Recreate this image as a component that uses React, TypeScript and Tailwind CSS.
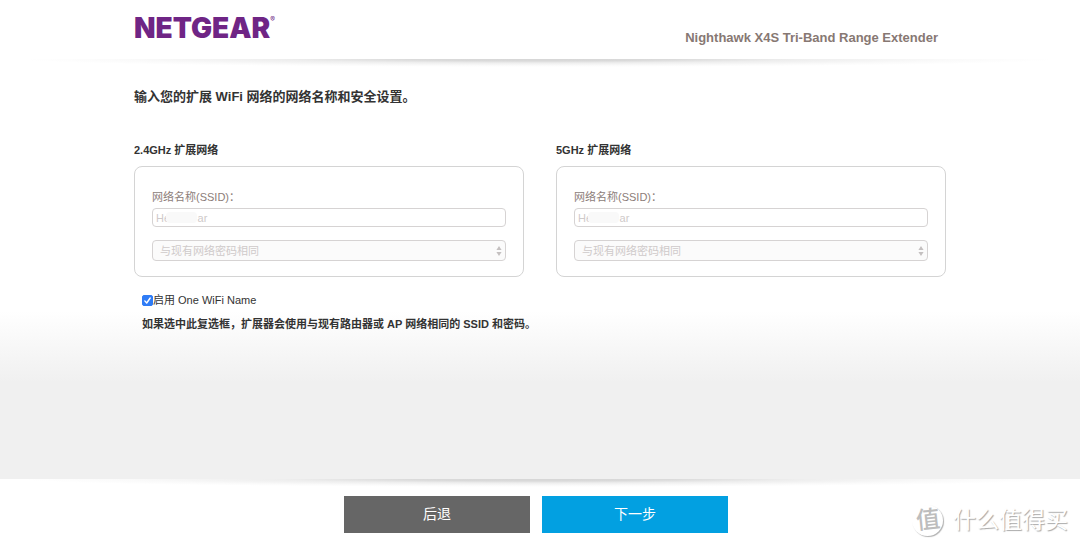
import React, { useId, useState } from "react";

function Divider() {
  return (
    <div
      aria-hidden="true"
      className="h-2 bg-[radial-gradient(48%_100%_at_50%_0%,#d6d6d6_0%,#dadada_25%,#eeeeee_50%,#fafafa_80%,#ffffff_100%)]"
    />
  );
}

function Steppers() {
  return (
    <svg
      aria-hidden="true"
      viewBox="0 0 6 10"
      className="pointer-events-none absolute right-1 top-1/2 h-[10px] w-[6px] -translate-y-1/2 fill-[#c4c0c0]"
    >
      <path d="M3 0 5.6 4H.4zM3 10 .4 6h5.2z" />
    </svg>
  );
}

function NetworkPanel({ title }: { title: string }) {
  const id = useId();
  return (
    <section>
      <h2 className="text-[11px] leading-4 font-bold text-[#333333]">{title}</h2>
      <div className="mt-2 rounded-lg border border-[#d4d4d4] bg-white px-[17px] pt-[22px] pb-[15px]">
        <label htmlFor={`${id}-ssid`} className="block text-[11px] leading-4 text-[#8c7d79]">
          网络名称(SSID)：
        </label>
        <div className="relative mt-[3px]">
          <input
            id={`${id}-ssid`}
            type="text"
            disabled
            defaultValue={"He\u00a0\u00a0\u00a0\u00a0\u00a0\u00a0\u00a0\u00a0\u00a0ar"}
            className="block h-[19px] w-full rounded-[4px] border border-[#d6d3d3] bg-white px-[3px] text-[11px] leading-4 text-[#cfcaca]"
          />
          <span
            aria-hidden="true"
            className="absolute left-[14px] top-[4px] h-[11px] w-[31px] rounded-sm bg-[#f9f9f9]"
          />
        </div>
        <div className="relative mt-[13px]">
          <select
            aria-label="密码"
            disabled
            className="block h-[21px] w-full appearance-none rounded-[4px] border border-[#d6d3d3] bg-[#fbfbfb] px-[7px] text-[11px] leading-4 text-[#cfcaca] opacity-100"
          >
            <option>与现有网络密码相同</option>
          </select>
          <Steppers />
        </div>
      </div>
    </section>
  );
}

function Watermark() {
  return (
    <div className="pointer-events-none absolute right-3 bottom-[11px] flex items-center gap-[10px] text-white [text-shadow:1px_1px_1px_#a8a8a8]">
      <span className="flex size-[31px] items-center justify-center rounded-full text-[24px] leading-none font-medium text-[#bdbdbd] shadow-[1px_1px_1px_#b0b0b0] [text-shadow:none]">
        <span className="-rotate-6">值</span>
      </span>
      <span className="text-[23px] leading-8">什么值得买</span>
    </div>
  );
}

export default function App() {
  const [oneName, setOneName] = useState(true);
  return (
    <div className="flex min-h-screen flex-col bg-white font-['Liberation_Sans','Noto_Sans_CJK_SC',sans-serif] text-[#333333]">
      <header className="bg-white">
        <div className="mx-auto flex h-[59px] w-[812px] max-w-full items-start justify-between">
          <div className="flex items-start pt-3 font-['Inter',sans-serif] text-[#6f2585]">
            <span className="text-[28px] leading-8 font-black">NETGEAR</span>
            <span className="pt-1 text-[7px] leading-[8px]">®</span>
          </div>
          <p className="pt-7 pr-2 text-[13px] leading-5 font-bold text-[#877873]">
            Nighthawk X4S Tri-Band Range Extender
          </p>
        </div>
      </header>

      <main className="flex-1 bg-[linear-gradient(to_bottom,#ffffff_60%,#f7f7f7_69%,#f0f0f0_77%)]">
        <Divider />
        <div className="mx-auto w-[812px] max-w-full pt-5">
          <h1 className="text-[13px] leading-5 font-bold">输入您的扩展 WiFi 网络的网络名称和安全设置。</h1>
          <div className="mt-[35px] grid grid-cols-2 gap-8">
            <NetworkPanel title="2.4GHz 扩展网络" />
            <NetworkPanel title="5GHz 扩展网络" />
          </div>
          <div className="mt-[15px] pl-2 text-[11px] leading-4">
            <label className="flex items-center">
              <span className="relative flex size-[11px]">
                <input
                  type="checkbox"
                  checked={oneName}
                  onChange={(e) => setOneName(e.target.checked)}
                  className="peer size-[11px] appearance-none rounded-[2px] border border-[#b5b5b5] bg-white checked:border-[#2f7cf6] checked:bg-[#2f7cf6]"
                />
                <svg
                  aria-hidden="true"
                  viewBox="0 0 11 11"
                  className="pointer-events-none absolute inset-0 hidden size-[11px] fill-none stroke-white stroke-[1.4] peer-checked:block"
                >
                  <path d="M2.8 5.9 4.7 8 8.2 3" strokeLinecap="round" strokeLinejoin="round" />
                </svg>
              </span>
              启用 One WiFi Name
            </label>
            <p className="mt-2 font-bold">如果选中此复选框，扩展器会使用与现有路由器或 AP 网络相同的 SSID 和密码。</p>
          </div>
        </div>
      </main>

      <footer className="relative bg-white">
        <Divider />
        <div className="flex justify-center gap-3 pt-[9px] pr-2 pb-[14px]">
          <button type="button" className="h-[37px] w-[186px] bg-[#666666] text-[14px] text-white">
            后退
          </button>
          <button type="button" className="h-[37px] w-[186px] bg-[#02a0e1] text-[14px] text-white">
            下一步
          </button>
        </div>
        <Watermark />
      </footer>
    </div>
  );
}
